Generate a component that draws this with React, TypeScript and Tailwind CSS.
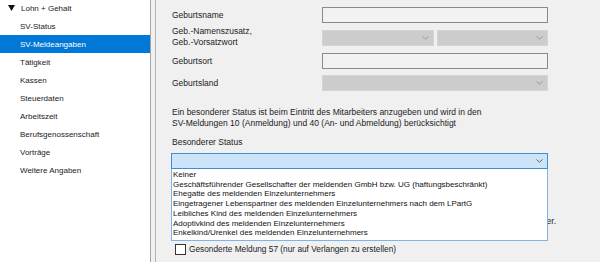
import React from 'react';

const NAV_ITEMS = [
  'SV-Status',
  'SV-Meldeangaben',
  'Tätigkeit',
  'Kassen',
  'Steuerdaten',
  'Arbeitszeit',
  'Berufsgenossenschaft',
  'Vorträge',
  'Weitere Angaben',
];

const STATUS_OPTIONS = [
  'Keiner',
  'Geschäftsführender Gesellschafter der meldenden GmbH bzw. UG (haftungsbeschränkt)',
  'Ehegatte des meldenden Einzelunternehmers',
  'Eingetragener Lebenspartner des meldenden Einzelunternehmers nach dem LPartG',
  'Leibliches Kind des meldenden Einzelunternehmers',
  'Adoptivkind des meldenden Einzelunternehmers',
  'Enkelkind/Urenkel des meldenden Einzelunternehmers',
];

function Chevron({ color }: { color: string }) {
  return (
    <svg width="7" height="4" viewBox="0 0 7 4" className="shrink-0">
      <path d="M0.5 0.5 L3.5 3.2 L6.5 0.5" fill="none" stroke={color} strokeWidth="1" />
    </svg>
  );
}

function TextInput() {
  return <div className="h-[16px] flex-1 border border-[#8a8a8a] bg-[#f2f2f2]" />;
}

function DisabledSelect() {
  return (
    <div className="h-[16px] flex-1 flex items-center justify-end pr-[4px] border border-[#d4d4d4] bg-[#cccccc]">
      <Chevron color="#9a9a9a" />
    </div>
  );
}

export default function App() {
  return (
    <div className="flex w-[600px] h-[262px] overflow-hidden bg-[#f0f0f0] text-[8px] leading-[11px] text-[#1b1b1b] font-['Liberation_Sans',Arial,sans-serif]">
      {/* Navigation tree */}
      <div className="w-[151px] shrink-0 bg-white border-r border-[#a4a4a4]">
        <div className="-mt-px">
          <div className="h-[18px] flex items-center pl-[8px] gap-[6px]">
            <svg width="7" height="6" viewBox="0 0 7 6">
              <polygon points="0,0 7,0 3.5,6" fill="#111" />
            </svg>
            <span>Lohn + Gehalt</span>
          </div>
          {NAV_ITEMS.map(item => (
            <div
              key={item}
              className={`h-[18px] flex items-center pl-[20px] ${
                item === 'SV-Meldeangaben' ? 'bg-[#0078d7] text-white' : ''
              }`}
            >
              {item}
            </div>
          ))}
        </div>
      </div>

      <div className="w-[4px] shrink-0" />

      {/* Form */}
      <div className="flex-1 border-l border-[#b4b4b4] pl-[16px] pr-[52px] pt-[7px] text-[8.5px]">
        <div className="flex items-center h-[16px]">
          <div className="w-[150px] shrink-0">Geburtsname</div>
          <TextInput />
        </div>
        <div className="flex items-center h-[16px] mt-[7px]">
          <div className="w-[150px] shrink-0 -mt-[3px]">
            Geb.-Namenszusatz,
            <br />
            Geb.-Vorsatzwort
          </div>
          <div className="flex-1 flex gap-[3px]">
            <DisabledSelect />
            <DisabledSelect />
          </div>
        </div>
        <div className="flex items-center h-[16px] mt-[7px]">
          <div className="w-[150px] shrink-0">Geburtsort</div>
          <TextInput />
        </div>
        <div className="flex items-center h-[16px] mt-[6px]">
          <div className="w-[150px] shrink-0">Geburtsland</div>
          <DisabledSelect />
        </div>

        <p className="mt-[16px]">
          Ein besonderer Status ist beim Eintritt des Mitarbeiters anzugeben und wird in den
          <br />
          SV-Meldungen 10 (Anmeldung) und 40 (An- und Abmeldung) berücksichtigt
        </p>

        <div className="mt-[8px]">Besonderer Status</div>

        <div className="relative mt-[5px] -ml-px">
          <div className="h-[16px] flex items-center justify-end pr-[4px] border border-[#3c8fdc] bg-[#cce4f7]">
            <Chevron color="#606060" />
          </div>
          <div className="absolute left-0 right-0 top-full z-10 bg-white border border-[#7fb3e6] border-t-0 pt-px pb-[2px] text-[8px] text-[#101010] leading-[9.7px]">
            {STATUS_OPTIONS.map(option => (
              <div key={option} className="pl-px whitespace-nowrap">
                {option}
              </div>
            ))}
          </div>
        </div>

        <div className="mt-[47px] -mr-[8px] text-right whitespace-nowrap">
          Die Angaben werden bei der Meldung an die Einzugsstelle berücksichtigt für den Mitarbeiter.
        </div>

        <label className="flex items-center gap-[3px] mt-[17px] ml-[3px]">
          <span className="w-[11px] h-[11px] border border-[#333] bg-white shrink-0" />
          <span className="text-[8.3px]">Gesonderte Meldung 57 (nur auf Verlangen zu erstellen)</span>
        </label>
      </div>
    </div>
  );
}
